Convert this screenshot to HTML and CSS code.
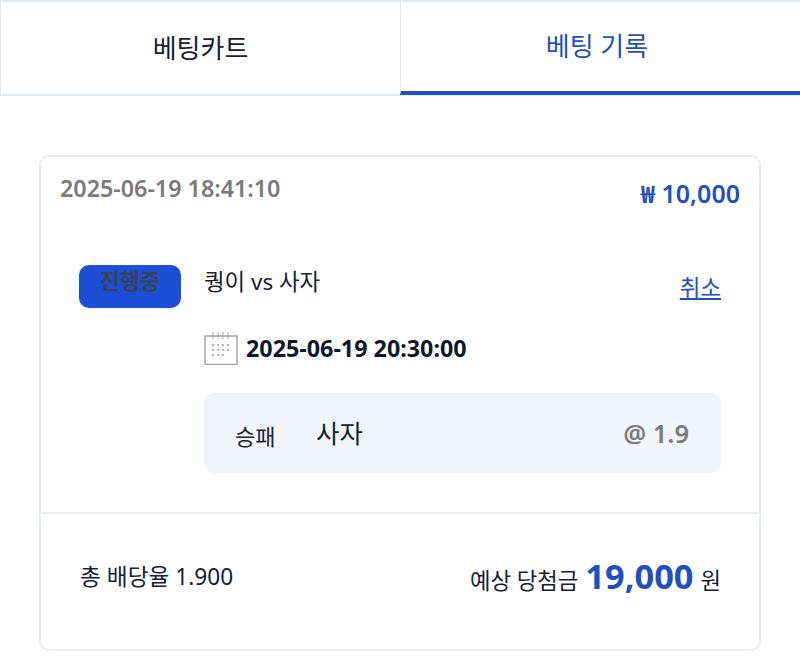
FILE: index.html
```html
<!DOCTYPE html>
<html lang="ko">
<head>
<meta charset="utf-8">
<title>베팅 기록</title>
<link rel="stylesheet" href="styles.css">
</head>
<body>
<nav class="tabs">
  <div class="tab">베팅카트</div>
  <div class="tab tab-active">베팅 기록</div>
</nav>
<main class="content">
  <section class="card">
    <header class="card-head">
      <span class="placed">2025-06-19 18:41:10</span>
      <span class="stake"><span class="won">₩</span> 10,000</span>
    </header>
    <div class="card-body">
      <div class="badge">진행중</div>
      <div class="detail">
        <div class="match-row">
          <span class="match">퀑이 vs 사자</span>
          <a class="cancel" href="#">취소</a>
        </div>
        <div class="date-row">
          <svg class="cal" viewBox="0 0 34 34" width="34" height="34" fill="none">
            <path d="M1 5H33V33.5H1Z" stroke="#a3a3a3" stroke-width="1.4"/>
            <path d="M9 1V8M14 1V8M19 1V8M24 1V8" stroke="#a3a3a3" stroke-width="1"/>
            <path d="M8 14h2M13 14h2M18 14h2M23 14h2M8 19h2M13 19h2M18 19h2M23 19h2M8 24h2M13 24h2M18 24h2" stroke="#b5b5b5" stroke-width="1.8"/>
          </svg>
          <span class="start">2025-06-19 20:30:00</span>
        </div>
        <div class="pick">
          <span class="pick-type">승패</span>
          <span class="pick-name">사자</span>
          <span class="pick-odds">@ 1.9</span>
        </div>
      </div>
    </div>
    <footer class="card-foot">
      <span class="total">총 배당율 1.900</span>
      <span class="win">예상 당첨금 <b class="win-num">19,000</b> 원</span>
    </footer>
  </section>
</main>
</body>
</html>
```
FILE: styles.css
```css
* { box-sizing: border-box; }
html, body { margin: 0; padding: 0; background: #fff; }
body {
  width: 800px;
  height: 667px;
  overflow: hidden;
  font-family: "Noto Sans", "Noto Sans CJK KR", sans-serif;
  color: #1a202c;
}
.tabs {
  display: grid;
  grid-template-columns: 400px 400px;
  height: 96px;
  border-top: 2px solid #e2e8f0;
  border-bottom: 2px solid #e2e8f0;
}
.tab {
  display: flex;
  align-items: center;
  justify-content: center;
  font-size: 26px;
  padding-bottom: 3px;
  color: #1a202c;
  border-left: 1px solid #e2e8f0;
}
.tab-active {
  color: #1f4fc1;
  border-bottom: 4px solid #1f4fc1;
  margin-bottom: -1px;
  padding: 0 7px 4px 0;
}
.content { padding: 59px 39px 0 39px; }
.card {
  height: 496px;
  border: 2px solid #e8ecf3;
  border-radius: 10px;
  display: flex;
  flex-direction: column;
}
.card-head {
  display: flex;
  justify-content: space-between;
  align-items: flex-start;
  padding: 13px 19px 0 19px;
  height: 108px;
}
.placed { font-size: 23.3px; font-weight: 600; color: #7a7a7a; line-height: 36px; }
.stake { font-size: 25px; font-weight: 600; color: #1f4fc1; line-height: 46px; }
.won { font-family: "Noto Sans CJK KR", sans-serif; font-weight: 700; font-size: 24px; }
.card-body {
  display: flex;
  padding: 0 38px;
  height: 249px;
  border-bottom: 2px solid #e8ecf3;
  gap: 23px;
}
.badge {
  width: 102px;
  height: 43px;
  background: #1c4ed8;
  border-radius: 10px;
  color: #374151;
  font-size: 22px;
  font-weight: 700;
  line-height: 31px;
  text-align: center;
}
.detail { flex: 1; }
.match-row { display: flex; justify-content: space-between; height: 36px; align-items: flex-start; }
.match { font-size: 22.4px; line-height: 34px; color: #1a202c; }
.cancel { font-size: 22.4px; line-height: 46px; color: #1f4fc1; text-decoration: underline; }
.date-row { display: flex; align-items: center; gap: 8px; margin-top: 30px; height: 34px; }
.cal { flex: none; }
.start { font-size: 23.3px; font-weight: 700; color: #111827; }
.pick {
  margin-top: 28px;
  height: 80px;
  background: #f1f4f9;
  border-radius: 10px;
  display: flex;
  align-items: center;
  padding: 0 32px 0 31px;
}
.pick-type { font-size: 22px; width: 81px; padding-top: 4px; color: #1a202c; }
.pick-name { font-size: 25.5px; flex: 1; color: #1a202c; padding-bottom: 4px; }
.pick-odds { font-size: 25.5px; font-weight: 600; color: #7a7a7a; }
.card-foot {
  flex: 1;
  display: flex;
  justify-content: space-between;
  align-items: center;
  padding: 0 38px 12px 39px;
}
.total { font-size: 22.7px; }
.win { display: flex; align-items: baseline; gap: 7px; font-size: 22.3px; }
.win-num { font-size: 34.4px; color: #1f4fc1; font-weight: 700; }
```
